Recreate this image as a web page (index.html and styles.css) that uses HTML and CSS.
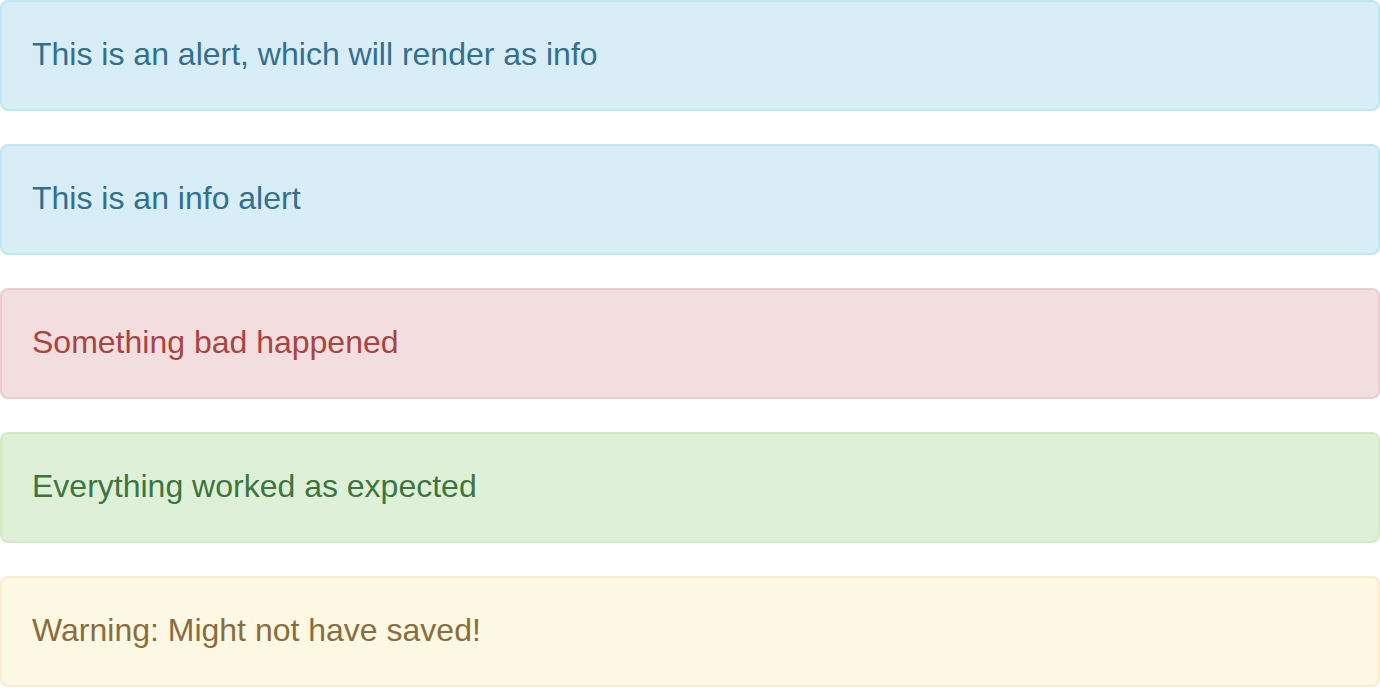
FILE: index.html
```html
<!DOCTYPE html>
<html lang="en">
<head>
<meta charset="utf-8">
<title>Alerts</title>
<link rel="stylesheet" href="styles.css">
</head>
<body>
<div class="alerts">
  <div class="alert alert-info">This is an alert, which will render as info</div>
  <div class="alert alert-info">This is an info alert</div>
  <div class="alert alert-danger">Something bad happened</div>
  <div class="alert alert-success">Everything worked as expected</div>
  <div class="alert alert-warning">Warning: Might not have saved!</div>
</div>
</body>
</html>
```
FILE: styles.css
```css
html, body {
  margin: 0;
  padding: 0;
  background: #fff;
}
body {
  font-family: "Liberation Sans", Arial, sans-serif;
  font-size: 32px;
}
.alerts {
  display: flex;
  flex-direction: column;
  gap: 33px;
}
.alert {
  padding: 29px 30px 31px;
  line-height: 47px;
  border: 2px solid transparent;
  border-radius: 8px;
}
.alert-info {
  background: #d9edf7;
  border-color: #bce8f1;
  color: #31708f;
}
.alert-danger {
  background: #f2dede;
  border-color: #ebccd1;
  color: #a94442;
}
.alert-success {
  background: #dff0d8;
  border-color: #d6e9c6;
  color: #3c763d;
}
.alert-warning {
  background: #fcf8e3;
  border-color: #faebcc;
  color: #8a6d3b;
}
```
